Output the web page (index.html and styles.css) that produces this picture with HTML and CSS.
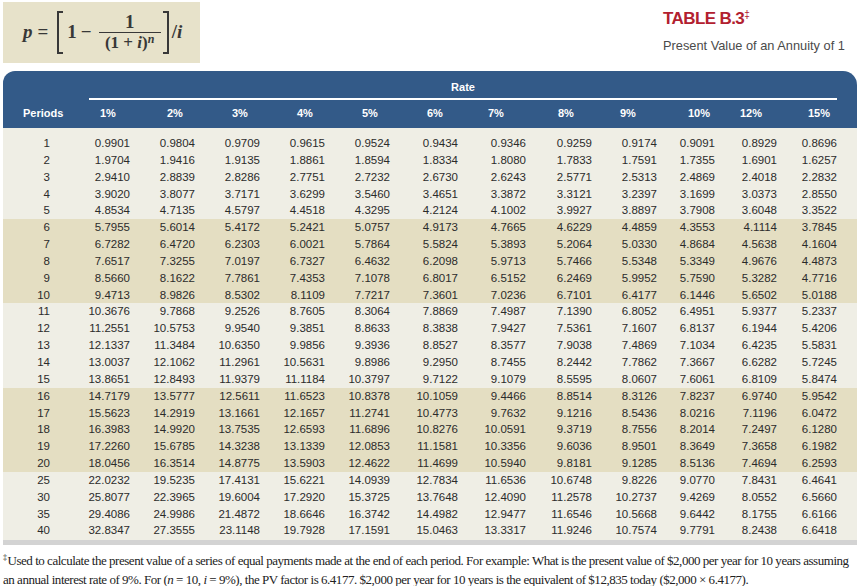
FILE: index.html
```html
<!DOCTYPE html>
<html>
<head>
<meta charset="utf-8">
<link rel="stylesheet" href="styles.css">
</head>
<body>
<div class="top">
  <div class="formula">
    <span class="var">p</span><span class="eq">=</span>
    <span class="bracket open"></span>
    <span class="num">1</span><span class="minus">−</span>
    <span class="frac"><span class="fn">1</span><span class="fd">(1 + <span class="var">i</span>)<sup class="var">n</sup></span></span>
    <span class="bracket close"></span>
    <span class="div">/<span class="var">i</span></span>
  </div>
  <div class="title">
    <div class="t1">TABLE B.3<sup>‡</sup></div>
    <div class="t2">Present Value of an Annuity of 1</div>
  </div>
</div>

<div class="table">
  <div class="head">
    <div class="rate">Rate</div>
    <div class="cols">
      <span>Periods</span><span>1%</span><span>2%</span><span>3%</span><span>4%</span><span>5%</span><span>6%</span><span>7%</span><span>8%</span><span>9%</span><span>10%</span><span>12%</span><span>15%</span>
    </div>
  </div>
  <div class="band light first">
    <div class="row"><span>1</span><span>0.9901</span><span>0.9804</span><span>0.9709</span><span>0.9615</span><span>0.9524</span><span>0.9434</span><span>0.9346</span><span>0.9259</span><span>0.9174</span><span>0.9091</span><span>0.8929</span><span>0.8696</span></div>
    <div class="row"><span>2</span><span>1.9704</span><span>1.9416</span><span>1.9135</span><span>1.8861</span><span>1.8594</span><span>1.8334</span><span>1.8080</span><span>1.7833</span><span>1.7591</span><span>1.7355</span><span>1.6901</span><span>1.6257</span></div>
    <div class="row"><span>3</span><span>2.9410</span><span>2.8839</span><span>2.8286</span><span>2.7751</span><span>2.7232</span><span>2.6730</span><span>2.6243</span><span>2.5771</span><span>2.5313</span><span>2.4869</span><span>2.4018</span><span>2.2832</span></div>
    <div class="row"><span>4</span><span>3.9020</span><span>3.8077</span><span>3.7171</span><span>3.6299</span><span>3.5460</span><span>3.4651</span><span>3.3872</span><span>3.3121</span><span>3.2397</span><span>3.1699</span><span>3.0373</span><span>2.8550</span></div>
    <div class="row"><span>5</span><span>4.8534</span><span>4.7135</span><span>4.5797</span><span>4.4518</span><span>4.3295</span><span>4.2124</span><span>4.1002</span><span>3.9927</span><span>3.8897</span><span>3.7908</span><span>3.6048</span><span>3.3522</span></div>
  </div>
  <div class="band dark">
    <div class="row"><span>6</span><span>5.7955</span><span>5.6014</span><span>5.4172</span><span>5.2421</span><span>5.0757</span><span>4.9173</span><span>4.7665</span><span>4.6229</span><span>4.4859</span><span>4.3553</span><span>4.1114</span><span>3.7845</span></div>
    <div class="row"><span>7</span><span>6.7282</span><span>6.4720</span><span>6.2303</span><span>6.0021</span><span>5.7864</span><span>5.5824</span><span>5.3893</span><span>5.2064</span><span>5.0330</span><span>4.8684</span><span>4.5638</span><span>4.1604</span></div>
    <div class="row"><span>8</span><span>7.6517</span><span>7.3255</span><span>7.0197</span><span>6.7327</span><span>6.4632</span><span>6.2098</span><span>5.9713</span><span>5.7466</span><span>5.5348</span><span>5.3349</span><span>4.9676</span><span>4.4873</span></div>
    <div class="row"><span>9</span><span>8.5660</span><span>8.1622</span><span>7.7861</span><span>7.4353</span><span>7.1078</span><span>6.8017</span><span>6.5152</span><span>6.2469</span><span>5.9952</span><span>5.7590</span><span>5.3282</span><span>4.7716</span></div>
    <div class="row"><span>10</span><span>9.4713</span><span>8.9826</span><span>8.5302</span><span>8.1109</span><span>7.7217</span><span>7.3601</span><span>7.0236</span><span>6.7101</span><span>6.4177</span><span>6.1446</span><span>5.6502</span><span>5.0188</span></div>
  </div>
  <div class="band light">
    <div class="row"><span>11</span><span>10.3676</span><span>9.7868</span><span>9.2526</span><span>8.7605</span><span>8.3064</span><span>7.8869</span><span>7.4987</span><span>7.1390</span><span>6.8052</span><span>6.4951</span><span>5.9377</span><span>5.2337</span></div>
    <div class="row"><span>12</span><span>11.2551</span><span>10.5753</span><span>9.9540</span><span>9.3851</span><span>8.8633</span><span>8.3838</span><span>7.9427</span><span>7.5361</span><span>7.1607</span><span>6.8137</span><span>6.1944</span><span>5.4206</span></div>
    <div class="row"><span>13</span><span>12.1337</span><span>11.3484</span><span>10.6350</span><span>9.9856</span><span>9.3936</span><span>8.8527</span><span>8.3577</span><span>7.9038</span><span>7.4869</span><span>7.1034</span><span>6.4235</span><span>5.5831</span></div>
    <div class="row"><span>14</span><span>13.0037</span><span>12.1062</span><span>11.2961</span><span>10.5631</span><span>9.8986</span><span>9.2950</span><span>8.7455</span><span>8.2442</span><span>7.7862</span><span>7.3667</span><span>6.6282</span><span>5.7245</span></div>
    <div class="row"><span>15</span><span>13.8651</span><span>12.8493</span><span>11.9379</span><span>11.1184</span><span>10.3797</span><span>9.7122</span><span>9.1079</span><span>8.5595</span><span>8.0607</span><span>7.6061</span><span>6.8109</span><span>5.8474</span></div>
  </div>
  <div class="band dark">
    <div class="row"><span>16</span><span>14.7179</span><span>13.5777</span><span>12.5611</span><span>11.6523</span><span>10.8378</span><span>10.1059</span><span>9.4466</span><span>8.8514</span><span>8.3126</span><span>7.8237</span><span>6.9740</span><span>5.9542</span></div>
    <div class="row"><span>17</span><span>15.5623</span><span>14.2919</span><span>13.1661</span><span>12.1657</span><span>11.2741</span><span>10.4773</span><span>9.7632</span><span>9.1216</span><span>8.5436</span><span>8.0216</span><span>7.1196</span><span>6.0472</span></div>
    <div class="row"><span>18</span><span>16.3983</span><span>14.9920</span><span>13.7535</span><span>12.6593</span><span>11.6896</span><span>10.8276</span><span>10.0591</span><span>9.3719</span><span>8.7556</span><span>8.2014</span><span>7.2497</span><span>6.1280</span></div>
    <div class="row"><span>19</span><span>17.2260</span><span>15.6785</span><span>14.3238</span><span>13.1339</span><span>12.0853</span><span>11.1581</span><span>10.3356</span><span>9.6036</span><span>8.9501</span><span>8.3649</span><span>7.3658</span><span>6.1982</span></div>
    <div class="row"><span>20</span><span>18.0456</span><span>16.3514</span><span>14.8775</span><span>13.5903</span><span>12.4622</span><span>11.4699</span><span>10.5940</span><span>9.8181</span><span>9.1285</span><span>8.5136</span><span>7.4694</span><span>6.2593</span></div>
  </div>
  <div class="band light last">
    <div class="row"><span>25</span><span>22.0232</span><span>19.5235</span><span>17.4131</span><span>15.6221</span><span>14.0939</span><span>12.7834</span><span>11.6536</span><span>10.6748</span><span>9.8226</span><span>9.0770</span><span>7.8431</span><span>6.4641</span></div>
    <div class="row"><span>30</span><span>25.8077</span><span>22.3965</span><span>19.6004</span><span>17.2920</span><span>15.3725</span><span>13.7648</span><span>12.4090</span><span>11.2578</span><span>10.2737</span><span>9.4269</span><span>8.0552</span><span>6.5660</span></div>
    <div class="row"><span>35</span><span>29.4086</span><span>24.9986</span><span>21.4872</span><span>18.6646</span><span>16.3742</span><span>14.4982</span><span>12.9477</span><span>11.6546</span><span>10.5668</span><span>9.6442</span><span>8.1755</span><span>6.6166</span></div>
    <div class="row"><span>40</span><span>32.8347</span><span>27.3555</span><span>23.1148</span><span>19.7928</span><span>17.1591</span><span>15.0463</span><span>13.3317</span><span>11.9246</span><span>10.7574</span><span>9.7791</span><span>8.2438</span><span>6.6418</span></div>
  </div>
  <div class="foot-bar"></div>
</div>

<p class="note"><sup>‡</sup>Used to calculate the present value of a series of equal payments made at the end of each period. For example: What is the present value of $2,000 per year for 10 years assuming<br>an annual interest rate of 9%. For (<i>n</i> = 10, <i>i</i> = 9%), the PV factor is 6.4177. $2,000 per year for 10 years is the equivalent of $12,835 today ($2,000 × 6.4177).</p>
</body>
</html>
```
FILE: styles.css
```css
html, body {
  margin: 0;
  padding: 0;
  background: #ffffff;
}
body {
  width: 862px;
  height: 586px;
  overflow: hidden;
  font-family: "Liberation Sans", Arial, sans-serif;
  color: #2a2a2a;
}

.top {
  display: flex;
  justify-content: space-between;
  align-items: flex-start;
  height: 71px;
}

.formula {
  margin: 2px 0 0 3px;
  width: 197px;
  height: 61px;
  box-sizing: border-box;
  background: #e7e2ca;
  display: flex;
  align-items: center;
  padding-left: 20px;
  padding-bottom: 1px;
  font-family: "Liberation Serif", "Times New Roman", serif;
  font-weight: bold;
  font-size: 19px;
  color: #383838;
}
.formula .var { font-style: italic; }
.formula .eq { margin: 0 9px 0 5px; }
.bracket {
  display: inline-block;
  width: 6px;
  height: 43px;
  border: 2px solid #383838;
  box-sizing: border-box;
}
.bracket.open { border-right: none; margin-right: 4px; }
.bracket.close { border-left: none; margin-left: 2px; }
.formula .minus { margin: 0 7px 0 4px; }
.frac {
  display: inline-flex;
  flex-direction: column;
  align-items: center;
  width: 62px;
  line-height: 18px;
}
.frac .fn { padding-bottom: 1px; }
.frac .fd {
  border-top: 1.5px solid #383838;
  width: 100%;
  text-align: center;
  font-size: 17px;
  padding-top: 1px;
}
.frac sup { font-size: 12px; vertical-align: 5px; line-height: 0; }
.formula .div { margin-left: 3px; }

.title {
  width: 199px;
  padding-top: 8px;
}
.t1 {
  font-size: 17px;
  font-weight: bold;
  color: #b2202f;
  letter-spacing: -0.6px;
  line-height: 22px;
}
.t1 sup {
  font-size: 10px;
  font-weight: normal;
  vertical-align: 6px;
  line-height: 0;
  letter-spacing: 0;
}
.t2 {
  margin-top: 8px;
  font-size: 12.8px;
  color: #4a4a4a;
  line-height: 15px;
}

.table {
  margin: 0 5px 0 3px;
}
.head {
  background: #335a88;
  border-radius: 12px 14px 0 0;
  height: 57px;
  box-sizing: border-box;
  padding-top: 9px;
  color: #fff;
  font-weight: bold;
  font-size: 11px;
}
.rate {
  margin: 0 20px 0 86px;
  text-align: center;
  line-height: 14px;
  padding-bottom: 4px;
  border-bottom: 2px solid #fff;
}
.cols {
  margin-top: 6px;
  display: grid;
  grid-template-columns: 77px 67px 65px 65px 65px 65px 61px 70px 62px 68px 52px 68px auto;
  padding-left: 20px;
  line-height: 14px;
}

.band.light { background: #efeee5; }
.band.dark { background: #e4dec2; }
.band.first { padding-top: 7px; }
.band.last { padding-bottom: 1px; }
.row {
  display: grid;
  grid-template-columns: 47px 80px 65px 65px 65px 65px 68px 68px 66px 65px 58px 62px 60px;
  height: 16.85px;
  line-height: 16.85px;
  font-size: 11.5px;
  color: #2b2b2b;
}
.row span { text-align: right; }
.foot-bar {
  height: 5px;
  background: #d3d3d3;
}

.note {
  margin: 7px 0 0 3px;
  font-family: "Liberation Serif", "Times New Roman", serif;
  font-size: 13px;
  letter-spacing: -0.47px;
  line-height: 18.5px;
  color: #222;
  white-space: nowrap;
}
.note sup {
  font-size: 8px;
  vertical-align: 5px;
  line-height: 0;
  margin-right: 1px;
}
```
